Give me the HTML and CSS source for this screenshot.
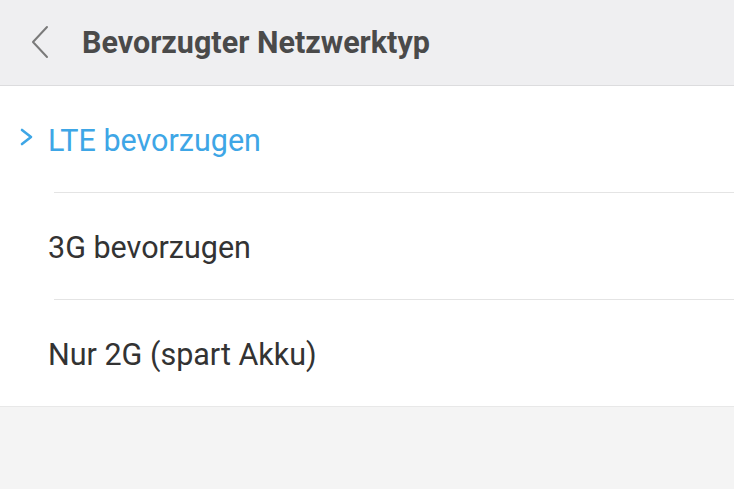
FILE: index.html
```html
<!DOCTYPE html>
<html lang="de">
<head>
<meta charset="utf-8">
<link rel="stylesheet" href="styles.css">
</head>
<body>
<div class="screen">
  <header class="topbar">
    <svg class="back" width="18" height="34" viewBox="0 0 18 34"><path d="M16 2 L2 17 L16 32" fill="none" stroke="#7a7a7a" stroke-width="2" stroke-linecap="round" stroke-linejoin="round"/></svg>
    <h1 class="title">Bevorzugter Netzwerktyp</h1>
  </header>
  <ul class="list">
    <li class="item selected">
      <svg class="mark" width="16" height="20" viewBox="0 0 16 20"><path d="M3 3 L12 10 L3 17" fill="none" stroke="#3ea6e6" stroke-width="2.6" stroke-linecap="round" stroke-linejoin="round"/></svg>
      <span class="label">LTE bevorzugen</span>
    </li>
    <li class="item"><span class="label">3G bevorzugen</span></li>
    <li class="item"><span class="label">Nur 2G (spart Akku)</span></li>
  </ul>
</div>
</body>
</html>
```
FILE: styles.css
```css
html, body {
  margin: 0;
  padding: 0;
}
body {
  background: #f4f4f4;
  font-family: Roboto, "Liberation Sans", sans-serif;
}
.screen {
  width: 734px;
  height: 489px;
  overflow: hidden;
}
.topbar {
  height: 85px;
  background: #efeff1;
  border-bottom: 1px solid #dcdcde;
  display: flex;
  align-items: center;
  padding-left: 31px;
}
.back {
  display: block;
  margin-right: 33px;
  margin-top: -2px;
}
.title {
  margin: 0;
  font-size: 30.5px;
  font-weight: 700;
  color: #4a4a4a;
}
.list {
  list-style: none;
  margin: 0;
  padding: 0;
  background: #ffffff;
  border-bottom: 1px solid #e8e8e8;
}
.item {
  position: relative;
  height: 106px;
  display: flex;
  align-items: center;
  padding-left: 48px;
}
.item + .item {
  padding-top: 1px;
}
.item + .item::before {
  content: "";
  position: absolute;
  top: 0;
  left: 54px;
  right: 0;
  height: 1px;
  background: #e4e4e4;
}
.label {
  font-size: 30.5px;
  color: #333333;
  padding-top: 3px;
}
.selected .label {
  color: #3ea6e6;
}
.mark {
  position: absolute;
  left: 19px;
  top: 41px;
}
```
